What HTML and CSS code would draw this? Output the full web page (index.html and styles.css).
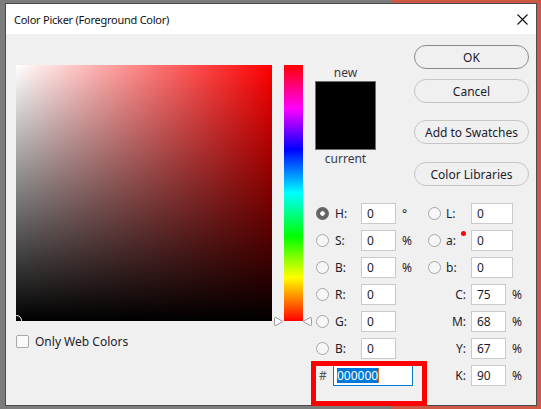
FILE: index.html
```html
<!DOCTYPE html>
<html lang="en">
<head>
    <meta charset="UTF-8">
    <title>Color Picker (Foreground Color)</title>
    <link rel="stylesheet" href="styles.css">
</head>
<body>
    <div class="desk-accent"></div>

    <div class="dialog">
        <div class="titlebar">
            <span class="title">Color Picker (Foreground Color)</span>
            <svg class="close" width="11" height="11" viewBox="0 0 11 11">
                <path d="M0.5 0.5 L10.5 10.5 M10.5 0.5 L0.5 10.5" stroke="#111" stroke-width="1.1" fill="none"/>
            </svg>
        </div>

        <div class="content">
            <div class="picker">
                <div class="field"><span class="field-marker"></span></div>
                <div class="web-only">
                    <span class="checkbox"></span>
                    <span>Only Web Colors</span>
                </div>
            </div>

            <div class="hue">
                <svg class="hue-arrow hue-arrow-left" width="11" height="11" viewBox="0 0 11 11">
                    <path d="M1.5 2.5 Q1.5 1 3 1.6 L9 5 Q10 5.5 9 6 L3 9.4 Q1.5 10 1.5 8.5 Z" fill="#fff" stroke="#9a9a9a"/>
                </svg>
                <svg class="hue-arrow hue-arrow-right" width="11" height="11" viewBox="0 0 11 11">
                    <path d="M9.5 2.5 Q9.5 1 8 1.6 L2 5 Q1 5.5 2 6 L8 9.4 Q9.5 10 9.5 8.5 Z" fill="#fff" stroke="#9a9a9a"/>
                </svg>
            </div>

            <div class="side">
                <div class="side-top">
                    <div class="preview">
                        <span class="preview-label">new</span>
                        <div class="swatch"></div>
                        <span class="preview-label">current</span>
                    </div>
                    <div class="buttons">
                        <button class="btn btn-default">OK</button>
                        <button class="btn btn-cancel">Cancel</button>
                        <button class="btn btn-swatches">Add to Swatches</button>
                        <button class="btn btn-libraries">Color Libraries</button>
                    </div>
                </div>

                <div class="fields">
                    <div class="row">
                        <div class="half-left">
                            <span class="radio radio-on"></span><span class="lbl">H:</span>
                            <span class="inp">0</span><span class="unit">°</span>
                        </div>
                        <div class="half-right">
                            <span class="radio"></span><span class="lbl">L:</span>
                            <span class="inp inp-wide">0</span>
                        </div>
                    </div>
                    <div class="row">
                        <div class="half-left">
                            <span class="radio"></span><span class="lbl">S:</span>
                            <span class="inp">0</span><span class="unit">%</span>
                        </div>
                        <div class="half-right">
                            <span class="radio"></span><span class="lbl lbl-dot">a:</span>
                            <span class="inp inp-wide">0</span>
                        </div>
                    </div>
                    <div class="row">
                        <div class="half-left">
                            <span class="radio"></span><span class="lbl">B:</span>
                            <span class="inp">0</span><span class="unit">%</span>
                        </div>
                        <div class="half-right">
                            <span class="radio"></span><span class="lbl">b:</span>
                            <span class="inp inp-wide">0</span>
                        </div>
                    </div>

                    <div class="row row-gap">
                        <div class="half-left">
                            <span class="radio"></span><span class="lbl">R:</span>
                            <span class="inp">0</span>
                        </div>
                        <div class="half-right">
                            <span class="lbl-cmyk">C:</span>
                            <span class="inp">75</span><span class="unit">%</span>
                        </div>
                    </div>
                    <div class="row">
                        <div class="half-left">
                            <span class="radio"></span><span class="lbl">G:</span>
                            <span class="inp">0</span>
                        </div>
                        <div class="half-right">
                            <span class="lbl-cmyk">M:</span>
                            <span class="inp">68</span><span class="unit">%</span>
                        </div>
                    </div>
                    <div class="row">
                        <div class="half-left">
                            <span class="radio"></span><span class="lbl">B:</span>
                            <span class="inp">0</span>
                        </div>
                        <div class="half-right">
                            <span class="lbl-cmyk">Y:</span>
                            <span class="inp">67</span><span class="unit">%</span>
                        </div>
                    </div>
                    <div class="row row-gap-sm">
                        <div class="half-left">
                            <span class="hash">#</span>
                            <span class="inp inp-hex"><span class="selected">000000</span><span class="caret"></span></span>
                        </div>
                        <div class="half-right">
                            <span class="lbl-cmyk">K:</span>
                            <span class="inp">90</span><span class="unit">%</span>
                        </div>
                    </div>
                </div>
            </div>
        </div>

        <div class="highlight"></div>
    </div>
</body>
</html>
```

FILE: styles.css
```css
* {
    box-sizing: border-box;
}

body {
    margin: 0;
    width: 541px;
    height: 409px;
    overflow: hidden;
    position: relative;
    background-color: #7c7c7c;
    font-family: "Noto Sans", "Open Sans", sans-serif;
    font-size: 12px;
    color: #1c1c2c;
}

.desk-accent {
    position: absolute;
    left: 391px;
    top: 0;
    right: 0;
    bottom: 0;
    background-color: #cd5843;
}

.dialog {
    position: absolute;
    left: 5px;
    top: 3px;
    width: 532px;
    height: 403px;
    border: 1px solid #4a4a4a;
    background-color: #f0f0f0;
}

.titlebar {
    height: 30px;
    background-color: #fff;
    display: flex;
    align-items: center;
    padding-left: 8px;
    padding-right: 8px;
}

.title {
    flex: 1;
    font-size: 11px;
    letter-spacing: -0.25px;
    color: #111;
}

/* left: saturation / brightness field */
.content {
    display: flex;
    padding: 11px 0 0 10px;
}

.picker {
    width: 256px;
    margin-top: 20px;
}

.field {
    position: relative;
    width: 256px;
    height: 256px;
    overflow: hidden;
    background: linear-gradient(to top, #000, rgba(0, 0, 0, 0)),
                linear-gradient(to right, #fff, #f00);
}

.field-marker {
    position: absolute;
    left: -5px;
    bottom: -5px;
    width: 11px;
    height: 11px;
    border-radius: 50%;
    border: 1px solid #fff;
}

.web-only {
    display: flex;
    align-items: center;
    margin-top: 13px;
    line-height: 15px;
}

.checkbox {
    width: 13px;
    height: 13px;
    border: 1px solid #a8a8a8;
    border-radius: 2px;
    background-color: #fafafa;
    margin-right: 6px;
}

/* hue slider */
.hue {
    position: relative;
    width: 19px;
    height: 256px;
    margin-top: 20px;
    margin-left: 12px;
    background: linear-gradient(to bottom, #f00, #f0f 17%, #00f 33%, #0ff 50%, #0f0 67%, #ff0 83%, #f00);
}

.hue-arrow {
    position: absolute;
    bottom: -6px;
}

.hue-arrow-left {
    left: -11px;
}

.hue-arrow-right {
    right: -10px;
}

/* right side */
.side {
    margin-left: 12px;
    width: 214px;
}

.side-top {
    display: flex;
    height: 141px;
}

.preview {
    width: 61px;
    display: flex;
    flex-direction: column;
    align-items: center;
    padding-top: 20px;
}

.preview-label {
    line-height: 16px;
    color: #3a3a48;
}

.swatch {
    width: 61px;
    height: 69px;
    margin-bottom: 1px;
    background-color: #000;
    border: 1px solid #6e6e6e;
}

.buttons {
    margin-left: 38px;
    width: 115px;
    display: flex;
    flex-direction: column;
}

.btn {
    flex-shrink: 0;
    height: 24px;
    border: 1px solid #c6c6c6;
    border-radius: 12px;
    background-color: #f0f0f0;
    font-family: inherit;
    font-size: 12px;
    color: #1c1c2c;
    padding: 0;
}

.btn-default {
    border-color: #8a8a8a;
}

.btn-cancel {
    margin-top: 10px;
}

.btn-swatches {
    margin-top: 17px;
}

.btn-libraries {
    margin-top: 18px;
}

/* value fields */
.fields {
    margin-top: 17px;
    padding-left: 1px;
}

.row {
    display: flex;
    height: 21px;
    align-items: center;
    margin-bottom: 6px;
}

.row-gap {
    margin-top: 4px;
}

.row-gap-sm {
    margin-top: 3px;
}

.half-left {
    display: flex;
    align-items: center;
    width: 112px;
}

.half-right {
    display: flex;
    align-items: center;
    width: 100px;
}

.radio {
    width: 13px;
    height: 13px;
    border-radius: 50%;
    border: 1px solid #a6a6a6;
    background-color: #f7f7f7;
    margin-right: 6px;
}

.radio-on {
    border: none;
    background: radial-gradient(circle, #fff 0 2px, #666 2.5px);
}

.half-right .radio {
    margin-right: 5px;
}

.lbl {
    position: relative;
    width: 26px;
}

.half-right .lbl {
    width: 25px;
}

.lbl-dot::after {
    content: "";
    position: absolute;
    left: 15px;
    top: -1px;
    width: 5px;
    height: 5px;
    border-radius: 50%;
    background-color: #f00;
}

.lbl-cmyk {
    width: 43px;
    text-align: right;
    padding-right: 5px;
}

.inp {
    width: 35px;
    height: 21px;
    line-height: 19px;
    border: 1px solid #cacaca;
    background-color: #fff;
    padding-left: 5px;
}

.inp-wide {
    width: 42px;
}

.unit {
    margin-left: 6px;
}

.hash {
    width: 17px;
    padding-left: 3px;
    color: #555;
}

.inp-hex {
    width: 80px;
    border-color: #0078d7;
    padding-left: 3px;
    display: flex;
    align-items: center;
}

.selected {
    background-color: #0078d7;
    color: #fff;
    line-height: 15px;
}

.caret {
    width: 1px;
    height: 15px;
    background-color: #d06a2a;
}

/* annotation box over the hex field */
.highlight {
    position: absolute;
    left: 305px;
    top: 357px;
    width: 116px;
    height: 45px;
    border: 5px solid #f00;
}
```
